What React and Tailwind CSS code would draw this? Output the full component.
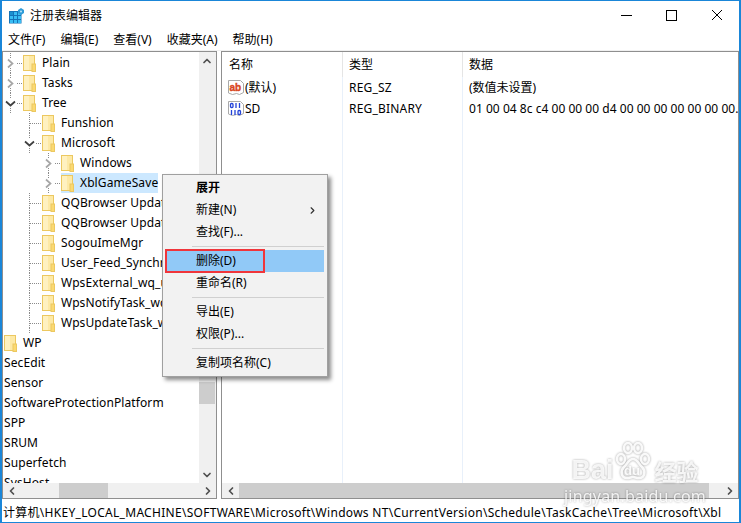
import { ChevronLeft, ChevronRight, ChevronUp, ChevronDown } from 'lucide-react'

const FONT = "font-['Noto_Sans','Noto_Sans_CJK_SC',sans-serif]"

// ── small drawings ────────────────────────────────────────────────────────────
function Folder() {
  return (
    <svg width="13" height="17" viewBox="0 0 13 17" className="shrink-0">
      <rect x="0.5" y="0.5" width="11" height="15" fill="#fde9a6" stroke="#ecc860" />
      <rect x="1" y="1" width="5" height="14" fill="#fff1c0" />
      <rect x="9" y="9" width="3.5" height="7.5" fill="#fbd971" stroke="#ecc860" />
    </svg>
  )
}

function AppIcon() {
  return (
    <svg width="16" height="16" viewBox="0 0 16 16" className="shrink-0">
      <rect x="0" y="3" width="12.5" height="12.5" fill="#1473b8" />
      <path d="M1 4h3v3H1zM5 4h3v3H5zM9 4h3v3H9zM1 8h3v3H1zM5 8h3v3H5zM9 8h3v3H9zM1 12h3v3H1zM5 12h3v3H5zM9 12h3v3H9z" fill="#38bdf4" />
      <path d="M1 4h3v3H1z" fill="#1b8fd0" />
      <path d="M12 0l3 2v3l-3 2-3-2V2z" fill="#2f9bd8" />
      <circle cx="12" cy="3.5" r="1" fill="#bfe6f7" />
    </svg>
  )
}

function StringIcon() {
  return (
    <svg width="16" height="16" viewBox="0 0 16 16" className="shrink-0">
      <path d="M0.5 0.5h12l3 3v9l-4 2-3-1-4 1-4-1.5z" fill="#fff" stroke="#a9a9a9" />
      <text x="1.5" y="10.5" fontSize="10" fontWeight="700" stroke="#d9481f" strokeWidth="0.4" fill="#d9481f" fontFamily="Liberation Sans">ab</text>
    </svg>
  )
}

function BinaryIcon() {
  return (
    <svg width="16" height="16" viewBox="0 0 16 16" className="shrink-0">
      <path d="M0.5 0.5h12l3 3v9l-4 2-3-1-4 1-4-1.5z" fill="#fff" stroke="#a9a9a9" />
      <g fill="none" stroke="#2343d8" strokeWidth="1.3">
        <rect x="2.5" y="2.5" width="2.5" height="4" rx="1" />
        <path d="M8 2v5M11.5 2v5M3.5 9v5M7 9v5" />
        <rect x="10" y="9.5" width="2.5" height="4" rx="1" />
      </g>
    </svg>
  )
}

// Expander chevron and dotted connector drawn for the front of a tree row
function Guide({ expand }) {
  return (
    <svg width="19" height="20" viewBox="0 0 19 20" className="shrink-0">
      <line x1="6.5" y1="0" x2="6.5" y2="6" stroke="#8a8a8a" strokeDasharray="1 1" />
      <line x1="6.5" y1="15" x2="6.5" y2="20" stroke="#8a8a8a" strokeDasharray="1 1" />
      {!expand && <line x1="6.5" y1="6" x2="6.5" y2="15" stroke="#8a8a8a" strokeDasharray="1 1" />}
      <line x1={expand ? 13 : 7} y1="10.5" x2="18" y2="10.5" stroke="#8a8a8a" strokeDasharray="1 1" />
      {expand === 'closed' && (
        <path d="M4 6.5l4.5 4-4.5 4" fill="none" stroke="#a6a6a6" strokeWidth="1.7" />
      )}
      {expand === 'open' && (
        <path d="M2 8.5l4.5 4 4.5-4" fill="none" stroke="#404040" strokeWidth="1.7" />
      )}
    </svg>
  )
}

// ── tree rows ─────────────────────────────────────────────────────────────────
function TreeRow({ label, indent, expand, guide, selected, noFolder }) {
  return (
    <div className={`flex h-5 shrink-0 items-center whitespace-nowrap ${indent}`}>
      {guide && <Guide expand={expand} />}
      <div className={`flex h-5 items-center ${selected ? 'bg-[#cce8ff]' : ''}`}>
        {!noFolder && <Folder />}
        <span className={noFolder ? 'pl-px' : 'pl-[6px]'}>{label}</span>
      </div>
    </div>
  )
}

function Tree() {
  return (
    <div className="flex min-h-0 min-w-0 flex-1 flex-col overflow-hidden pt-px tracking-[0.1px]">
      <TreeRow label="Plain" indent="pl-px" guide expand="closed" />
      <TreeRow label="Tasks" indent="pl-px" guide expand="closed" />
      <TreeRow label="Tree" indent="pl-px" guide expand="open" />
      <TreeRow label="Funshion" indent="pl-[20px]" guide />
      <TreeRow label="Microsoft" indent="pl-[20px]" guide expand="open" />
      <TreeRow label="Windows" indent="pl-[39px]" guide expand="closed" />
      <TreeRow label="XblGameSave" indent="pl-[39px]" guide expand="closed" selected />
      <TreeRow label="QQBrowser Update Task" indent="pl-[20px]" guide />
      <TreeRow label="QQBrowser Update Task" indent="pl-[20px]" guide />
      <TreeRow label="SogouImeMgr" indent="pl-[20px]" guide />
      <TreeRow label="User_Feed_Synchronization" indent="pl-[20px]" guide />
      <TreeRow label="WpsExternal_wq_update" indent="pl-[20px]" guide />
      <TreeRow label="WpsNotifyTask_wq_update" indent="pl-[20px]" guide />
      <TreeRow label="WpsUpdateTask_wq_update" indent="pl-[20px]" guide />
      <TreeRow label="WP" indent="pl-px" />
      <TreeRow label="SecEdit" indent="pl-0" noFolder />
      <TreeRow label="Sensor" indent="pl-0" noFolder />
      <TreeRow label="SoftwareProtectionPlatform" indent="pl-0" noFolder />
      <TreeRow label="SPP" indent="pl-0" noFolder />
      <TreeRow label="SRUM" indent="pl-0" noFolder />
      <TreeRow label="Superfetch" indent="pl-0" noFolder />
      <TreeRow label="SysHost" indent="pl-0" noFolder />
    </div>
  )
}

// ── scrollbars ────────────────────────────────────────────────────────────────
function HScroll({ before, thumb }) {
  return (
    <div className="flex h-[15px] shrink-0 items-stretch bg-[#f0f0f0]">
      <div className="flex w-[17px] shrink-0 items-center justify-center text-[#505050]">
        <ChevronLeft size={12} strokeWidth={3.5} />
      </div>
      <div className="flex min-w-0 flex-1">
        <div className={before} />
        <div className={`bg-[#cdcdcd] ${thumb}`} />
      </div>
      <div className="flex w-[17px] shrink-0 items-center justify-center text-[#505050]">
        <ChevronRight size={12} strokeWidth={3.5} />
      </div>
    </div>
  )
}

function VScroll() {
  return (
    <div className="flex w-[17px] shrink-0 flex-col bg-[#f0f0f0] pr-px">
      <div className="flex h-[17px] shrink-0 items-center justify-center text-[#505050]">
        <ChevronUp size={12} strokeWidth={3.5} />
      </div>
      <div className="h-[313px] shrink-0" />
      <div className="h-[22px] shrink-0 bg-[#cdcdcd]" />
      <div className="flex-1" />
      <div className="flex h-[17px] shrink-0 items-center justify-center text-[#505050]">
        <ChevronDown size={12} strokeWidth={3.5} />
      </div>
    </div>
  )
}

// ── context menu ──────────────────────────────────────────────────────────────
function MenuItem({ label, bold, arrow, active }) {
  return (
    <div className={`relative flex h-[22px] items-center pl-[30px] pr-[6px] ${active ? 'bg-[#91c9f7]' : ''}`}>
      <span className={`flex-1 ${bold ? 'font-bold' : ''}`}>{label}</span>
      {arrow && <ChevronRight size={11} strokeWidth={2.5} className="text-[#303030]" />}
      {active && <div className="absolute -inset-y-px -left-px w-[100px] border-2 border-[#f0353b]" />}
    </div>
  )
}

function MenuSep() {
  return <div className="my-[3px] ml-[26px] h-px bg-[#d0d0d0]" />
}

function ContextMenu() {
  return (
    <div className="absolute left-[160px] top-[173px] flex h-[203px] w-[166px] flex-col border border-[#a0a0a0] bg-[#f2f2f2] px-[3px] py-[1px] shadow-[3px_3px_4px_rgba(0,0,0,0.45)]">
      <div className="h-[1px]" />
      <MenuItem label="展开" bold />
      <MenuItem label="新建(N)" arrow />
      <MenuItem label="查找(F)..." />
      <MenuSep />
      <MenuItem label="删除(D)" active />
      <MenuItem label="重命名(R)" />
      <MenuSep />
      <MenuItem label="导出(E)" />
      <MenuItem label="权限(P)..." />
      <MenuSep />
      <MenuItem label="复制项名称(C)" />
    </div>
  )
}

// ── watermark ─────────────────────────────────────────────────────────────────
function Watermark() {
  return (
    <div className="pointer-events-none absolute left-[566px] top-[441px] flex w-[134px] flex-col items-center text-white/85 drop-shadow-[0_0_1px_rgba(0,0,0,0.4)]">
      <div className="flex h-[44px] items-end font-['Liberation_Sans',sans-serif]">
        <span className="text-[27px] font-bold leading-[32px]">Bai</span>
        <svg width="38" height="44" viewBox="0 0 38 44" className="shrink-0">
          <g fill="none" stroke="#ffffff" strokeOpacity="0.9" strokeWidth="2.5">
            <ellipse cx="7" cy="17" rx="4" ry="5" />
            <ellipse cx="14" cy="6" rx="4" ry="5" />
            <ellipse cx="24" cy="6" rx="4" ry="5" />
            <ellipse cx="31" cy="17" rx="4" ry="5" />
            <path d="M19 17c4 0 6 5 9 8 4 4 3 11-3 11-3 0-4-1-6-1s-3 1-6 1c-6 0-7-7-3-11 3-3 5-8 9-8z" />
          </g>
          <text x="10" y="33" fontSize="13" fontWeight="700" fill="#ffffff" fillOpacity="0.9" fontFamily="Liberation Sans">du</text>
        </svg>
        <span className="ml-[3px] text-[22px] font-bold leading-[32px] font-['Noto_Sans_CJK_SC',sans-serif]">经验</span>
      </div>
      <span className="text-[16px] leading-[20px] tracking-[0.2px]">jingyan.baidu.com</span>
    </div>
  )
}

// ── main page ─────────────────────────────────────────────────────────────────
export default function App() {
  return (
    <div className={`relative flex h-[523px] w-[741px] flex-col overflow-hidden border-x-2 border-y border-[#1a86d8] bg-white text-[12px] leading-none text-black ${FONT}`}>
      {/* Title bar */}
      <div className="flex h-[29px] shrink-0 items-center pl-[7px]">
        <AppIcon />
        <span className="ml-[5px] flex-1 pt-px">注册表编辑器</span>
        <svg width="118" height="29" viewBox="0 0 118 29" className="shrink-0">
          <path d="M0 14.5h11" stroke="#000" />
          <rect x="45.5" y="9.5" width="10" height="10" fill="none" stroke="#000" />
          <path d="M91 9l10 10M101 9l-10 10" stroke="#000" />
        </svg>
      </div>

      {/* Menu bar */}
      <div className="flex h-[20px] shrink-0 items-center gap-[15px] pl-[6px]">
        <span>文件(F)</span>
        <span>编辑(E)</span>
        <span>查看(V)</span>
        <span>收藏夹(A)</span>
        <span>帮助(H)</span>
      </div>
      <div className="h-px shrink-0 bg-[#f0f0f0]" />

      {/* Panes */}
      <div className="flex min-h-0 flex-1 gap-[4px]">
        {/* Left: tree */}
        <div className="flex w-[215px] shrink-0 flex-col border border-[#8f8f8f]">
          <div className="flex min-h-0 flex-1">
            <Tree />
            <VScroll />
          </div>
          <HScroll before="w-[39px] shrink-0" thumb="w-[49px]" />
        </div>

        {/* Right: values */}
        <div className="flex min-w-0 flex-1 flex-col border border-[#8f8f8f]">
          <div className="grid min-h-0 flex-1 grid-cols-[121px_120px_1fr] grid-rows-[25px_21px_21px_1fr]">
            <div className="flex items-center border-r border-[#e5e5e5] pl-[7px]">名称</div>
            <div className="flex items-center border-r border-[#e5e5e5] pl-[6px]">类型</div>
            <div className="flex items-center pl-[6px]">数据</div>

            <div className="flex items-center gap-[1px] border-r border-[#e8f0fa] pl-[6px]"><StringIcon />(默认)</div>
            <div className="flex items-center border-r border-[#e8f0fa] pl-[6px] tracking-[0.2px]">REG_SZ</div>
            <div className="flex items-center pl-[6px]">(数值未设置)</div>

            <div className="flex items-center gap-[1px] border-r border-[#e8f0fa] pl-[6px]"><BinaryIcon />SD</div>
            <div className="flex items-center border-r border-[#e8f0fa] pl-[6px] tracking-[0.2px]">REG_BINARY</div>
            <div className="flex items-center overflow-hidden whitespace-nowrap pl-[6px] tracking-[0.03px]">01 00 04 8c c4 00 00 00 d4 00 00 00 00 00 00 00.</div>

            <div className="border-r border-[#e8f0fa]" />
            <div className="border-r border-[#e8f0fa]" />
            <div />
          </div>
          <HScroll before="w-0" thumb="w-[470px]" />
        </div>
      </div>

      {/* Status bar */}
      <div className="flex h-[23px] shrink-0 items-center overflow-hidden whitespace-nowrap pl-[1px] pt-[5px] tracking-[0.29px]">
        计算机\HKEY_LOCAL_MACHINE\SOFTWARE\Microsoft\Windows NT\CurrentVersion\Schedule\TaskCache\Tree\Microsoft\Xbl
      </div>

      <ContextMenu />
      <Watermark />
    </div>
  )
}
